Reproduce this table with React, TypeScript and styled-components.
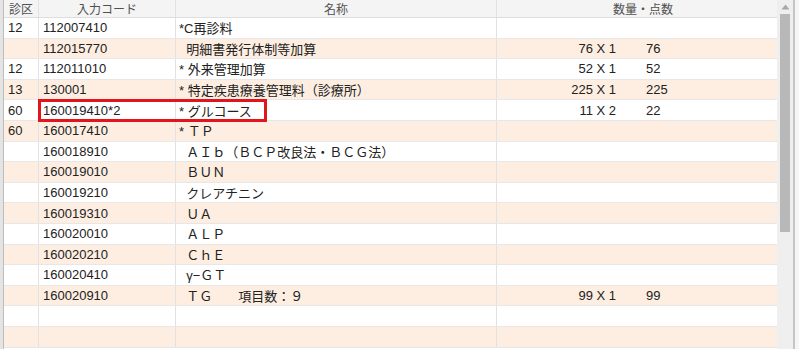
import React from "react";
import styled, { createGlobalStyle } from "styled-components";

const Global = createGlobalStyle`
  html, body { margin: 0; padding: 0; background: #ffffff; }
  body { font-family: "Liberation Sans", "Noto Sans CJK JP", sans-serif; }
`;

const Frame = styled.div`
  display: flex;
  width: 799px;
  height: 349px;
  overflow: hidden;
`;

const LeftEdge = styled.div`
  width: 3px;
  background: #e4e4e4;
  border-right: 1px solid #bdbdbd;
`;

const TableArea = styled.div`
  position: relative;
  flex: 1;
  display: flex;
  flex-direction: column;
`;

const cols = "35px 137px 321px 1fr";

const HeaderRow = styled.div`
  display: grid;
  grid-template-columns: ${cols};
  height: 18px;
  box-sizing: border-box;
  background: #f4f4f4;
  border-bottom: 1px solid #dedede;
`;

const HeadCell = styled.div<{ $pad?: number }>`
  display: flex;
  align-items: center;
  justify-content: center;
  padding-left: ${(p) => p.$pad ?? 0}px;
  font-size: 12px;
  color: #505050;
  border-right: 1px solid #e2e2e2;
  &:last-child { border-right: none; }
`;

const Row = styled.div<{ $alt: boolean }>`
  display: grid;
  grid-template-columns: ${cols};
  height: 20.6px;
  box-sizing: border-box;
  background: ${(p) => (p.$alt ? "#fdeee1" : "#ffffff")};
  border-bottom: 1px solid #e7e7e7;
`;

const Cell = styled.div<{ $indent?: number }>`
  display: flex;
  align-items: center;
  padding-left: ${(p) => p.$indent ?? 0}px;
  font-size: 13px;
  color: #222222;
  white-space: pre;
  overflow: hidden;
  border-right: 1px solid #e2e2e2;
  &:last-child { border-right: none; }
`;

const Qty = styled.span`
  display: inline-block;
  width: 119px;
  text-align: right;
`;

const Pts = styled.span`
  display: inline-block;
  margin-left: 30px;
`;

const Highlight = styled.div`
  position: absolute;
  left: 34px;
  top: 99px;
  width: 229px;
  height: 23px;
  box-sizing: border-box;
  border: 3px solid #e2141c;
  pointer-events: none;
`;

const ScrollTrack = styled.div`
  width: 16px;
  background: #efefef;
  display: flex;
  flex-direction: column;
  align-items: center;
`;

const ArrowBox = styled.div`
  height: 14px;
  display: flex;
  align-items: center;
  justify-content: center;
`;

const Thumb = styled.div`
  width: 10px;
  height: 218px;
  background: #b8b8b8;
`;

const RightEdge = styled.div`
  width: 6px;
  display: flex;
`;

const EdgeLine = styled.div`
  width: 2px;
  background: #c6c6c6;
`;

const EdgeFill = styled.div`
  flex: 1;
  background: #f5f5f5;
`;

type Item = { ku?: string; code: string; name: string; qty?: string; pts?: string };

const items: Item[] = [
  { ku: "12", code: "112007410", name: "*C再診料" },
  { code: "112015770", name: "  明細書発行体制等加算", qty: "76 X 1", pts: "76" },
  { ku: "12", code: "112011010", name: "* 外来管理加算", qty: "52 X 1", pts: "52" },
  { ku: "13", code: "130001", name: "* 特定疾患療養管理料（診療所）", qty: "225 X 1", pts: "225" },
  { ku: "60", code: "160019410*2", name: "* グルコース", qty: "11 X 2", pts: "22" },
  { ku: "60", code: "160017410", name: "* ＴＰ" },
  { code: "160018910", name: "  ＡＩｂ（ＢＣＰ改良法・ＢＣＧ法）" },
  { code: "160019010", name: "  ＢＵＮ" },
  { code: "160019210", name: "  クレアチニン" },
  { code: "160019310", name: "  ＵＡ" },
  { code: "160020010", name: "  ＡＬＰ" },
  { code: "160020210", name: "  ＣｈＥ" },
  { code: "160020410", name: "  γ−ＧＴ" },
  { code: "160020910", name: "  ＴＧ　　項目数：９", qty: "99 X 1", pts: "99" },
  { code: "", name: "" },
  { code: "", name: "" },
];

export default function App() {
  return (
    <>
      <Global />
      <Frame>
        <LeftEdge />
        <TableArea>
          <HeaderRow>
            <HeadCell>診区</HeadCell>
            <HeadCell>入力コード</HeadCell>
            <HeadCell>名称</HeadCell>
            <HeadCell $pad={12}>数量・点数</HeadCell>
          </HeaderRow>
          {items.map((it, i) => (
            <Row key={i} $alt={i % 2 === 1}>
              <Cell $indent={4}>{it.ku ?? ""}</Cell>
              <Cell $indent={4}>{it.code}</Cell>
              <Cell $indent={3}>{it.name}</Cell>
              <Cell>
                {it.qty && (
                  <>
                    <Qty>{it.qty}</Qty>
                    <Pts>{it.pts}</Pts>
                  </>
                )}
              </Cell>
            </Row>
          ))}
          <Highlight />
        </TableArea>
        <ScrollTrack>
          <ArrowBox>
            <svg width="9" height="6" viewBox="0 0 9 6">
              <polygon points="4.5,0.5 8.5,5.5 0.5,5.5" fill="#a8a8a8" />
            </svg>
          </ArrowBox>
          <Thumb />
        </ScrollTrack>
        <RightEdge>
          <EdgeLine />
          <EdgeFill />
        </RightEdge>
      </Frame>
    </>
  );
}
